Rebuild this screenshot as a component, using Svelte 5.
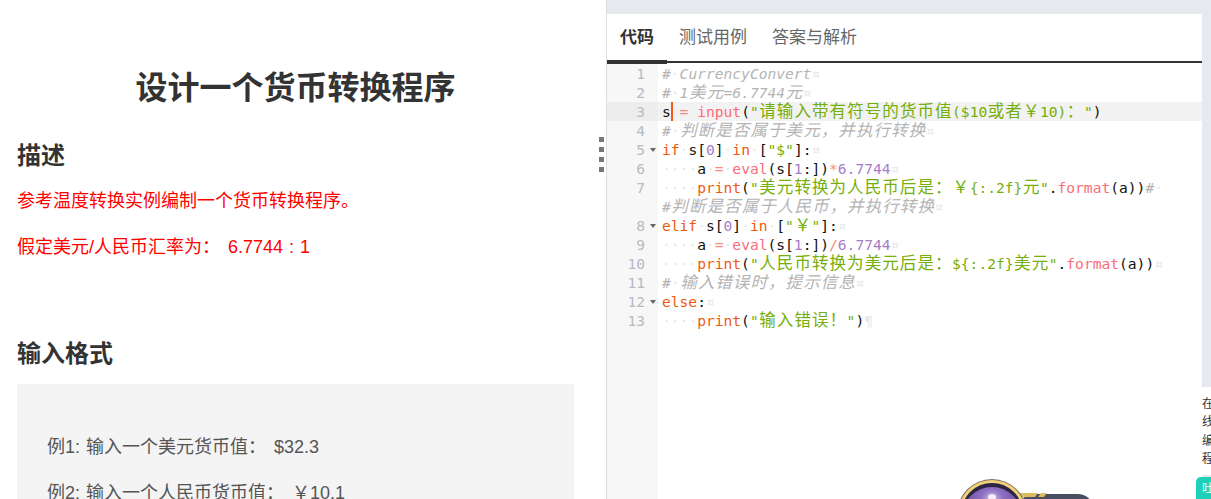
<script>
  const KW = "kw", FN = "fn", STR = "str", NUM = "num", OP = "op", CM = "cm", INV = "inv";

  // each row: gutter number (or blank for a wrapped row), fold arrow, tokens
  const rows = [
    { n: 1, t: [[CM, "#"], [INV, "·"], [CM, "CurrencyConvert"], [INV, "¤"]] },
    { n: 2, t: [[CM, "#"], [INV, "·"], [CM, "1美元=6.7744元"], [INV, "¤"]] },
    { n: 3, active: true, t: [["", "s"], [INV, "·"], [OP, "="], [INV, "·"], [FN, "input"], ["", "("], [STR, "\"请输入带有符号的货币值($10或者￥10)："], [STR, "\""], ["", ")"]] },
    { n: 4, t: [[CM, "#"], [INV, "·"], [CM, "判断是否属于美元，并执行转换"], [INV, "¤"]] },
    { n: 5, fold: true, t: [[KW, "if"], [INV, "·"], ["", "s["], [NUM, "0"], ["", "]"], [INV, "·"], [KW, "in"], [INV, "·"], ["", "["], [STR, "\"$\""], ["", "]:"], [INV, "¤"]] },
    { n: 6, t: [[INV, "····"], ["", "a"], [INV, "·"], [OP, "="], [INV, "·"], [FN, "eval"], ["", "(s["], [NUM, "1"], ["", ":])"], [OP, "*"], [NUM, "6.7744"], [INV, "¤"]] },
    { n: 7, t: [[INV, "····"], [KW, "print"], ["", "("], [STR, "\"美元转换为人民币后是：￥{:.2f}元\""], ["", "."], [FN, "format"], ["", "(a))"], [CM, "#"], [INV, "·"]] },
    { t: [[CM, "#判断是否属于人民币，并执行转换"], [INV, "¤"]] },
    { n: 8, fold: true, t: [[KW, "elif"], [INV, "·"], ["", "s["], [NUM, "0"], ["", "]"], [INV, "·"], [KW, "in"], [INV, "·"], ["", "["], [STR, "\"￥\""], ["", "]:"], [INV, "¤"]] },
    { n: 9, t: [[INV, "····"], ["", "a"], [INV, "·"], [OP, "="], [INV, "·"], [FN, "eval"], ["", "(s["], [NUM, "1"], ["", ":])"], [OP, "/"], [NUM, "6.7744"], [INV, "¤"]] },
    { n: 10, t: [[INV, "····"], [KW, "print"], ["", "("], [STR, "\"人民币转换为美元后是：${:.2f}美元\""], ["", "."], [FN, "format"], ["", "(a))"], [INV, "¤"]] },
    { n: 11, t: [[CM, "#"], [INV, "·"], [CM, "输入错误时，提示信息"], [INV, "¤"]] },
    { n: 12, fold: true, t: [[KW, "else"], ["", ":"], [INV, "¤"]] },
    { n: 13, t: [[INV, "····"], [KW, "print"], ["", "("], [STR, "\"输入错误！\""], ["", ")"], [INV, "¶"]] },
  ];

  // the editor gives wide characters exactly two cells
  function cells(text) {
    const out = [];
    let run = "";
    for (const ch of text) {
      if (/[\u3000-\u9fff\uff00-\uffef]/.test(ch)) {
        if (run) out.push({ wide: false, s: run });
        run = "";
        out.push({ wide: true, s: ch });
      } else run += ch;
    }
    if (run) out.push({ wide: false, s: run });
    return out;
  }

  const tabs = ["代码", "测试用例", "答案与解析"];
</script>

<div class="page">
  <section class="problem">
    <h1>设计一个货币转换程序</h1>
    <h2>描述</h2>
    <p class="red">参考温度转换实例编制一个货币转换程序。</p>
    <p class="red">假定美元/人民币汇率为：<span class="val">6.7744 : 1</span></p>
    <h2 class="second">输入格式</h2>
    <div class="sample">
      <p>例1: 输入一个美元货币值：<span class="val">$32.3</span></p>
      <p>例2: 输入一个人民币货币值：<span class="val">￥10.1</span></p>
    </div>
    <div class="handle" aria-hidden="true">
      {#each [0, 1, 2, 3] as d}<i></i>{/each}
    </div>
  </section>

  <section class="workspace">
    <div class="strip"></div>
    <nav class="tabs">
      {#each tabs as tab, idx}
        <span class="tab" class:on={idx === 0}>{tab}</span>
      {/each}
    </nav>
    <div class="editor">
      {#each rows as row}
        <div class="row" class:active={row.active}>
          <div class="gutter">
            {#if row.n}{row.n}{/if}
            {#if row.fold}<b class="fold"></b>{/if}
          </div>
          <div class="code">
            {#each row.t as tok}
              <span class={tok[0]}>
                {#each cells(tok[1]) as c}{#if c.wide}<span class="cjk">{c.s}</span>{:else}{c.s}{/if}{/each}
              </span>
            {/each}
            {#if row.active}<i class="caret"></i>{/if}
          </div>
        </div>
      {/each}
      <div class="rest"></div>
    </div>

    <div class="scroll"></div>
    <div class="promo">在<br />线<br />编<br />程</div>
    <div class="tease">吐</div>
    <svg class="mascot" width="140" height="24" viewBox="0 0 140 24" aria-hidden="true">
      <defs>
        <radialGradient id="orb" cx="50%" cy="22%" r="60%">
          <stop offset="0" stop-color="#d8cbee" />
          <stop offset="0.3" stop-color="#8f70c2" />
          <stop offset="1" stop-color="#5b4190" />
        </radialGradient>
      </defs>
      <rect x="60" y="16" width="72" height="24" rx="14" fill="#474f60" />
      <path d="M60 15h18l-3 4H60z" fill="#dcbb62" />
      <path d="M81 15h6l-3 4h-6z" fill="#dcbb62" />
      <circle cx="32" cy="36" r="35" fill="#77735f" />
      <circle cx="32" cy="36" r="34" fill="#f2d078" />
      <circle cx="32" cy="36" r="31" fill="#2c2444" />
      <circle cx="32" cy="39" r="30" fill="url(#orb)" />
      <ellipse cx="32" cy="19" rx="4" ry="3" fill="#f4eefb" />
    </svg>
  </section>
</div>

<style>
  :global(body) {
    background: #fff;
  }
  .page {
    display: grid;
    grid-template-columns: 607px 604px;
    height: 499px;
    overflow: hidden;
    font-family: "Liberation Sans", "Noto Sans CJK SC", sans-serif;
    color: #333;
  }
  .problem {
    position: relative;
    padding: 0 32px 0 17px;
    border-right: 1px solid #ddd;
    box-sizing: content-box;
    width: 557px;
    overflow: hidden;
    height: 499px;
  }
  h1 {
    margin: 67px 0 0;
    font-size: 32px;
    line-height: 42px;
    text-align: center;
    font-weight: 700;
  }
  h2 {
    margin: 30px 0 0;
    font-size: 24px;
    line-height: 34px;
    font-weight: 700;
  }
  h2.second {
    margin-top: 76px;
  }
  p {
    margin: 18px 0 0;
    font-size: 18px;
    line-height: 28px;
    word-spacing: 1px;
  }
  .red {
    color: #f00;
  }
  h2 + .red {
    margin-top: 14px;
  }
  .val {
    margin-left: 8px;
  }
  .sample {
    margin-top: 13px;
    padding: 31px 30px;
    background: #f4f4f4;
    color: #555;
  }
  .handle {
    position: absolute;
    right: 2px;
    top: 137px;
    width: 5px;
    display: grid;
    gap: 5px;
  }
  .handle i {
    display: block;
    height: 5px;
    background: #777;
  }
  .workspace {
    position: relative;
    background: #fff;
    overflow: hidden;
  }
  .strip {
    height: 14px;
    background: #e6e9ed;
  }
  .tabs {
    display: flex;
    height: 47px;
    gap: 25px;
    padding-left: 13px;
    border-bottom: 2px solid #333;
    margin-right: 9px;
    align-items: center;
    font-size: 17px;
    color: #666;
  }
  .tab {
    height: 47px;
    line-height: 45px;
    margin-bottom: -2px;
    position: relative;
  }
  .tab.on {
    font-weight: 700;
    color: #333;
  }
  .tab.on::after {
    content: "";
    position: absolute;
    left: -13px;
    right: -13px;
    bottom: -2px;
    height: 4px;
    background: #333;
  }
  .editor {
    margin-right: 9px;
    padding-top: 1px;
    font-family: "DejaVu Sans Mono", "Noto Sans CJK SC", monospace;
    font-size: 14.6px;
    line-height: 19px;
    color: #111;
  }
  .row {
    display: grid;
    grid-template-columns: 51px 1fr;
    height: 19px;
  }
  .row.active {
    background: #f2f2f2;
  }
  .gutter {
    position: relative;
    background: #f7f7f7;
    color: #b4bcc4;
    text-align: right;
    padding-right: 13px;
  }
  .row.active .gutter {
    background: #ededed;
  }
  .fold {
    position: absolute;
    right: 2px;
    top: 8px;
    border: 3px solid transparent;
    border-top: 4px solid #666;
    border-bottom: 0;
  }
  .code {
    position: relative;
    padding-left: 4px;
    white-space: pre;
    overflow: hidden;
  }
  .cjk {
    display: inline-block;
    width: 17.58px;
    font-size: 16.5px;
    line-height: 19px;
    height: 19px;
    text-align: center;
    vertical-align: top;
  }
  .caret {
    position: absolute;
    left: 12.8px;
    top: 0;
    width: 2px;
    height: 19px;
    background: #f4591c;
  }
  .rest {
    height: 200px;
    width: 51px;
    background: #f7f7f7;
  }
  .kw {
    color: #f2590d;
  }
  .fn {
    color: #fa6d7a;
  }
  .str {
    color: #76ae0a;
  }
  .num {
    color: #a77fc9;
  }
  .op {
    color: #f98a7a;
  }
  .cm {
    color: #b4b4b4;
    font-style: italic;
  }
  .inv {
    color: #e8e8e8;
  }
  .scroll {
    position: absolute;
    right: 0;
    top: 0;
    width: 9px;
    height: 100%;
    background: #e6e9ed;
  }
  .promo {
    position: absolute;
    left: 595px;
    top: 387px;
    width: 20px;
    height: 88px;
    padding-top: 8px;
    box-sizing: border-box;
    background: #fff;
    font-size: 12px;
    line-height: 18.4px;
    color: #333;
  }
  .tease {
    position: absolute;
    left: 589px;
    top: 477px;
    width: 40px;
    height: 40px;
    padding-left: 6px;
    border-radius: 5px;
    background: #1dd1b8;
    color: #fff;
    font-size: 12px;
    line-height: 24px;
  }
  .mascot {
    position: absolute;
    left: 353px;
    top: 478px;
  }
</style>
